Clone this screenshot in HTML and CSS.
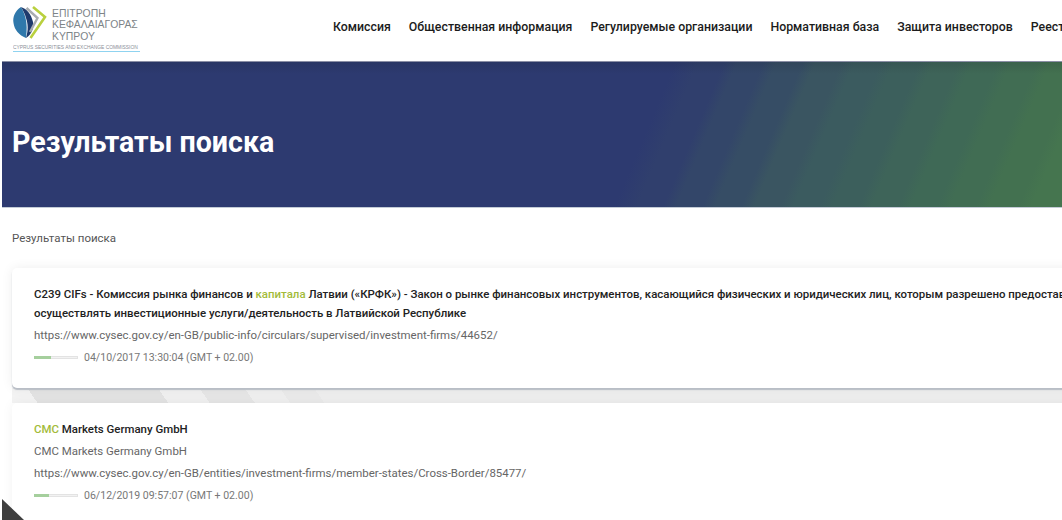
FILE: index.html
```html
<!DOCTYPE html>
<html lang="ru">
<head>
<meta charset="utf-8">
<title>Результаты поиска</title>
<link rel="stylesheet" href="styles.css">
</head>
<body>
<header class="topbar">
  <a class="logo">
    <div class="logo-main">
      <svg class="logo-mark" width="36" height="36" viewBox="12 4 36 36">
        <path d="M21 7 C15 11 12.5 17 13.5 23 C14.500 30 19 35 26 38 C27 30 27 24 25.500 18 C24.500 14 23 10 21 7Z" fill="#2f78ab"/>
        <path d="M21 7 C27 9 31 14 33 22 C34 28 32 34 26 38 C28.500 30 28 24 26 18 C25 14 23 10 21 7Z" fill="#1e3a6c"/>
        <path d="M26.500 8 L37.500 18 L30 32" fill="none" stroke="#a9adb0" stroke-width="2.4"/>
        <path d="M33 7 L45 17 L30.500 38" fill="none" stroke="#b9d03e" stroke-width="2.600"/>
      </svg>
      <div class="logo-words">
        <span>ΕΠΙΤΡΟΠΗ</span>
        <span>ΚΕΦΑΛΑΙΑΓΟΡΑΣ</span>
        <span>ΚΥΠΡΟΥ</span>
      </div>
    </div>
    <div class="logo-sub">CYPRUS SECURITIES AND EXCHANGE COMMISSION</div>
  </a>
  <nav class="nav">
    <a>Комиссия</a>
    <a>Общественная информация</a>
    <a>Регулируемые организации</a>
    <a>Нормативная база</a>
    <a>Защита инвесторов</a>
    <a>Реестры</a>
  </nav>
</header>
<section class="hero">
  <h1>Результаты поиска</h1>
</section>
<main class="content">
  <div class="crumb">Результаты поиска</div>
  <div class="results">
    <article class="card">
      <h3 class="res-title">C239 CIFs - Комиссия рынка финансов и <em>капитала</em> Латвии («КРФК») - Закон о рынке финансовых инструментов, касающийся физических и юридических лиц, которым разрешено предоставлять и осуществлять инвестиционные услуги/деятельность в Латвийской Республике</h3>
      <div class="res-line">https://www.cysec.gov.cy/en-GB/public-info/circulars/supervised/investment-firms/44652/</div>
      <div class="res-meta"><span class="bar"><span class="bar-fill wide"></span></span><span>04/10/2017 13:30:04 (GMT + 02.00)</span></div>
    </article>
    <article class="card">
      <h3 class="res-title"><em>CMC</em> Markets Germany GmbH</h3>
      <div class="res-line">CMC Markets Germany GmbH</div>
      <div class="res-line">https://www.cysec.gov.cy/en-GB/entities/investment-firms/member-states/Cross-Border/85477/</div>
      <div class="res-meta"><span class="bar"><span class="bar-fill narrow"></span></span><span>06/12/2019 09:57:07 (GMT + 02.00)</span></div>
    </article>
  </div>
  <div class="corner"></div>
</main>
</body>
</html>
```
FILE: styles.css
```css
* { box-sizing: border-box; }
html, body { margin: 0; height: 520px; overflow: hidden; }
body { width: 1062px; background: #fff; font-family: Roboto, "Noto Sans", sans-serif; color: #222; }

.topbar { height: 60px; display: flex; align-items: flex-start; overflow: hidden; white-space: nowrap; background: #fff; }
.logo { width: 333px; flex: none; padding: 4px 0 0 12px; }
.logo-main { display: flex; gap: 4px; }
.logo-mark { flex: none; }
.logo-words { display: flex; flex-direction: column; font-family: "Liberation Sans", sans-serif; font-size: 10.4px; line-height: 11.5px; color: #7d8488; padding-top: 3.5px; }
.logo-sub { width: 127px; margin: 2px 0 0 1px; font-family: "Liberation Sans", sans-serif; font-size: 4.9px; line-height: 7px; color: #8a8f98; border-bottom: 1px solid #8fd3f0; white-space: nowrap; overflow: hidden; }
.nav { display: flex; gap: 18px; padding-top: 20px; font-size: 12.34px; line-height: 15px; font-weight: 500; color: #1c1c1c; }

.hero { margin: 1px 0 0 2px; height: 147px; display: flex; align-items: center; padding: 14px 0 0 10px;
  background:
    linear-gradient(rgba(20,30,30,.14), rgba(20,30,30,0) 12px),
    linear-gradient(113deg, #2d3a70 0 620px, #303f6d 641px 665px, #334669 677px 701px, #364d65 713px 737px, #3a5561 749px 773px, #3b5b5f 785px 809px, #3c5f5c 821px 845px, #3e6459 857px 881px, #3f6956 893px 917px, #416d53 929px 953px, #437150 965px 992px, #45754f 1004px);
  border-top: 1px solid #8b8fa5; border-bottom: 1px solid #c3cbd6; }
.hero h1 { margin: 0; font-size: 28.6px; line-height: 32px; font-weight: 700; color: #fff; }

.content { position: relative; height: 312px; padding: 0 0 0 12px; overflow: hidden; }
.crumb { padding-top: 23px; font-size: 11.5px; line-height: 14px; color: #555; }
.results { display: flex; flex-direction: column; gap: 15px; margin-top: 23px; width: 1120px;
  background-color: #fff;
  background-image: linear-gradient(55deg, #f3f3f3 0 21px, #e3e3e3 21px 128px, #f0f0f0 128px 162px, #e6e6e6 162px 199px, #efefef 199px 228px, #eaeaea 228px 256px, #eeeeee 256px);
  background-repeat: no-repeat;
  background-size: 1120px 15px;
  background-position: 0 120px; }
.card { background: #fff; border-radius: 5px; padding: 17px 22px 0; box-shadow: 0 2px 1px #b9bec6, 0 0 12px rgba(0,0,0,.07); }
.card:first-child { height: 120px; }
.card:last-child { height: 130px; box-shadow: 0 0 12px rgba(0,0,0,.05); }
.res-title { margin: 0 0 3px; font-size: 11.45px; line-height: 19px; font-weight: 500; color: #222; }
.res-title em { font-style: normal; color: #a3bb3a; }
.res-line { font-size: 11.45px; line-height: 19px; margin-bottom: 3px; color: #666; }
.res-meta { display: flex; align-items: center; gap: 6px; font-size: 10.55px; line-height: 19px; color: #777; }
.bar { display: block; width: 44px; height: 3px; background: #f2f2f2; box-shadow: inset 0 0 0 1px #e3e3e3; }
.bar-fill { display: block; height: 100%; background: #a5cf9d; }
.bar-fill.wide { width: 17px; }
.bar-fill.narrow { width: 15px; }
.corner { position: absolute; left: 2px; top: 291px; width: 0; height: 0; border-style: solid; border-width: 21px 0 0 22px; border-color: transparent transparent transparent #3f3f3f; }
```
